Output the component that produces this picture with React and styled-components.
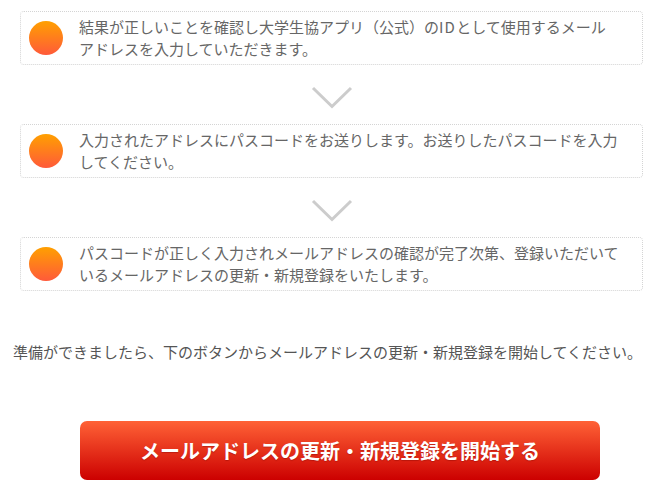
import { Fragment } from "react";
import styled, { createGlobalStyle } from "styled-components";

const GlobalStyle = createGlobalStyle`
  body {
    margin: 0;
    background: #fff;
    font-family: "Noto Sans CJK JP", "Noto Sans", sans-serif;
  }
`;

const Page = styled.div`
  width: 662px;
  padding: 11px 9px 0 13px;
  box-sizing: border-box;
`;

const StepList = styled.div`
  display: flex;
  flex-direction: column;
  align-items: center;
  margin: 0 10px 0 7px;
`;

const Step = styled.div`
  width: 100%;
  box-sizing: border-box;
  display: flex;
  align-items: center;
  gap: 16px;
  padding: 4px 22px 4px 8px;
  border: 1px dotted #d4d4d4;
  border-radius: 4px;
`;

const Dot = styled.span`
  flex: 0 0 34px;
  width: 34px;
  height: 34px;
  border-radius: 50%;
  background: linear-gradient(#ffa000, #ff5a3a);
`;

const StepText = styled.p`
  margin: 0;
  font-size: 15px;
  line-height: 22px;
  color: #666;
`;

/* half-width latin letters are set a little looser, as in the original */
const Latin = styled.span`
  letter-spacing: 0.08em;
`;

const Arrow = styled.svg`
  display: block;
  margin: ${(p) => p.$top}px 0 ${(p) => p.$bottom}px;
`;

const Note = styled.p`
  margin: 50px 0 0;
  font-size: 15px;
  line-height: 22px;
  color: #555;
`;

const StartButton = styled.button`
  display: block;
  width: 520px;
  height: 59px;
  margin: 58px 0 0 67px;
  border: none;
  border-radius: 7px;
  background: linear-gradient(#ff6236, #cc0000);
  color: #fff;
  font-family: inherit;
  font-size: 20px;
  font-weight: 700;
  text-shadow: 0 1px 1px rgba(120, 0, 0, 0.35);
  cursor: pointer;
`;

const Chevron = ({ top, bottom }) => (
  <Arrow $top={top} $bottom={bottom} width="42" height="23" viewBox="0 0 42 23">
    <polyline
      points="2,2 21,20.5 40,2"
      fill="none"
      stroke="#cccccc"
      strokeWidth="3"
    />
  </Arrow>
);

const steps = [
  <>
    結果が正しいことを確認し大学生協アプリ（公式）の<Latin>ID</Latin>
    として使用するメールアドレスを入力していただきます。
  </>,
  "入力されたアドレスにパスコードをお送りします。お送りしたパスコードを入力してください。",
  "パスコードが正しく入力されメールアドレスの確認が完了次第、登録いただいているメールアドレスの更新・新規登録をいたします。",
];

export default function App() {
  return (
    <>
      <GlobalStyle />
      <Page>
        <StepList>
          {steps.map((text, i) => (
            <Fragment key={i}>
              {i > 0 && <Chevron top={21} bottom={15} />}
              <Step>
                <Dot />
                <StepText>{text}</StepText>
              </Step>
            </Fragment>
          ))}
        </StepList>
        <Note>
          準備ができましたら、下のボタンからメールアドレスの更新・新規登録を開始してください。
        </Note>
        <StartButton>メールアドレスの更新・新規登録を開始する</StartButton>
      </Page>
    </>
  );
}
